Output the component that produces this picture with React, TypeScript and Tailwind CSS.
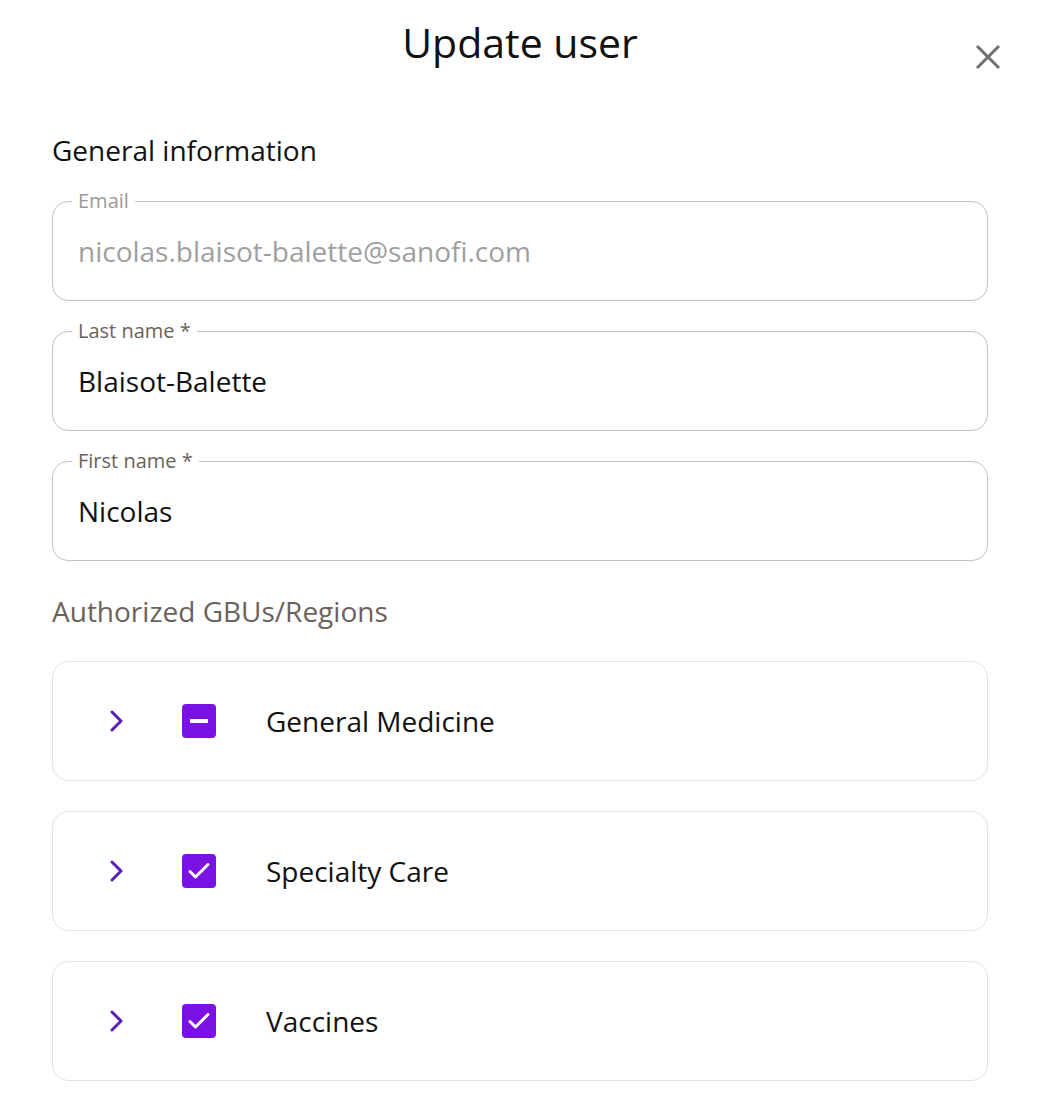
import { useState } from 'react'

const font = { fontFamily: '"Open Sans", "Noto Sans", Arial, sans-serif' }

function Field({ label, value, disabled }: { label: string; value: string; disabled?: boolean }) {
  return (
    <div className="relative flex h-[100px] items-center rounded-2xl border border-[#c4c4c4] px-[25px]">
      <span
        className={`absolute -top-[14px] left-[19px] bg-white px-[6px] text-[20px] leading-[26px] ${
          disabled ? 'text-[#9a9a9a]' : 'text-[#6b625c]'
        }`}
      >
        {label}
      </span>
      <span className={`text-[28px] ${disabled ? 'text-[#a0a0a0]' : 'text-[#111]'}`}>{value}</span>
    </div>
  )
}

function Chevron() {
  return (
    <svg width="14" height="24" viewBox="0 0 14 24" fill="none">
      <path d="M3 3l9 9-9 9" stroke="#5b1fb8" strokeWidth="3" strokeLinecap="round" strokeLinejoin="round" />
    </svg>
  )
}

function Box({ state }: { state: 'all' | 'some' }) {
  return (
    <div className="flex h-[34px] w-[34px] items-center justify-center rounded-[4px] bg-[#7a12e4]">
      {state === 'some' ? (
        <div className="h-[4px] w-[18px] bg-white" />
      ) : (
        <svg width="26" height="26" viewBox="0 0 26 26" fill="none">
          <path d="M4 13.5l5.5 5.5L22 6.5" stroke="white" strokeWidth="3" strokeLinecap="round" strokeLinejoin="round" />
        </svg>
      )}
    </div>
  )
}

export default function App() {
  const [groups] = useState([
    { name: 'General Medicine', state: 'some' as const },
    { name: 'Specialty Care', state: 'all' as const },
    { name: 'Vaccines', state: 'all' as const },
  ])

  return (
    <div className="min-h-[1104px] bg-white pl-[52px] pr-[62px] pb-6 text-[#111]" style={font}>
      <div className="relative pt-[18px]">
        <h1 className="text-center text-[41px] leading-[48px]">Update user</h1>
        <button className="absolute -right-[14px] top-[43px] text-[#707070]">
          <svg width="28" height="28" viewBox="0 0 28 28" fill="none">
            <path d="M3 3l22 22M25 3L3 25" stroke="currentColor" strokeWidth="3" />
          </svg>
        </button>
      </div>

      <h2 className="mt-[66px] text-[28px] leading-[36px]">General information</h2>

      <div className="mt-[33px] flex flex-col gap-[30px]">
        <Field label="Email" value="nicolas.blaisot-balette@sanofi.com" disabled />
        <Field label="Last name *" value="Blaisot-Balette" />
        <Field label="First name *" value="Nicolas" />
      </div>

      <h3 className="mt-[33px] text-[28px] leading-[34px] text-[#6b625c]">Authorized GBUs/Regions</h3>

      <div className="mt-[33px] flex flex-col gap-[30px]">
        {groups.map((g) => (
          <div key={g.name} className="flex h-[120px] items-center rounded-2xl border border-[#e3e3e3]">
            <div className="ml-[56px] flex w-[14px] justify-center">
              <Chevron />
            </div>
            <div className="ml-[59px]">
              <Box state={g.state} />
            </div>
            <span className="ml-[50px] text-[28px]">{g.name}</span>
          </div>
        ))}
      </div>
    </div>
  )
}
